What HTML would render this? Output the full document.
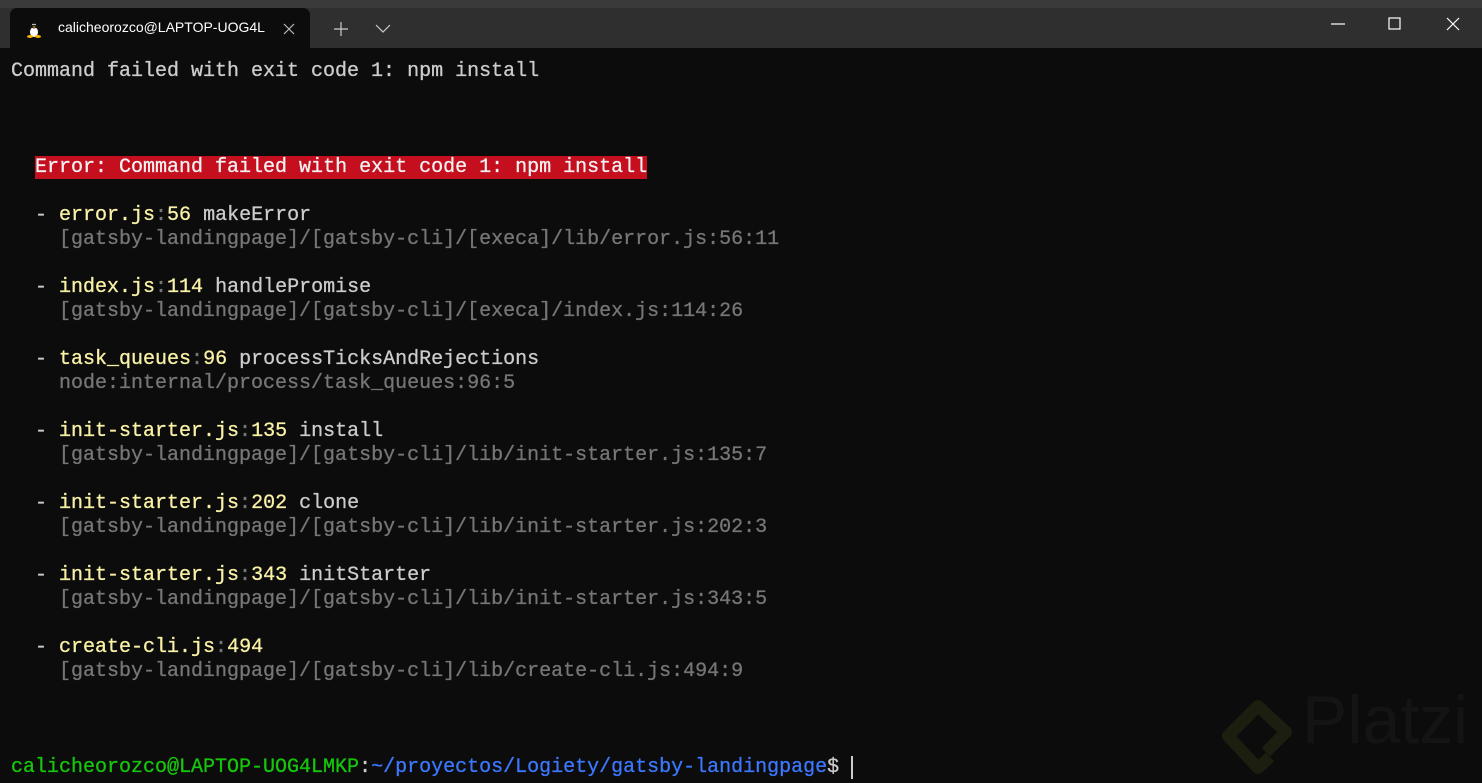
<!DOCTYPE html>
<html><head><meta charset="utf-8"><style>
html,body{margin:0;padding:0;background:#0c0c0c;width:1482px;height:783px;overflow:hidden}
.top{position:absolute;left:0;top:0;width:1482px;height:48px;background:#2f2f2f}
.strip{position:absolute;left:0;top:0;width:1482px;height:8px;background:#3a3a3a}
.tab{position:absolute;left:10px;top:8px;width:300px;height:40px;background:#0c0c0c;border-radius:7px 7px 0 0}
.tab .t{position:absolute;left:48px;top:11px;font:14px "Liberation Sans",sans-serif;color:#fff}
.term{position:absolute;left:11px;top:60px;font:20px/24px "Liberation Mono",monospace;color:#cccccc;white-space:pre;-webkit-text-stroke:0.3px currentColor}
.y{color:#f9f1a5}.g{color:#767676}.r{background:#c50f1f;color:#f2f2f2}
.p{color:#16c60c}.b{color:#3b78ff}
</style></head><body>
<div class="top"><div class="strip"></div>
<div class="tab">
<svg style="position:absolute;left:16px;top:12px" width="16" height="18" viewBox="0 0 16 18"><ellipse cx="8" cy="10" rx="6" ry="7" fill="#111"/><ellipse cx="8" cy="12" rx="4" ry="5" fill="#fff"/><ellipse cx="8" cy="5" rx="3" ry="3.5" fill="#111"/><circle cx="7" cy="4.5" r="0.8" fill="#fff"/><circle cx="9" cy="4.5" r="0.8" fill="#fff"/><path d="M6.5 6.5h3l-1.5 1.5z" fill="#f5b400"/><ellipse cx="4" cy="16.5" rx="3" ry="1.5" fill="#f5b400"/><ellipse cx="12" cy="16.5" rx="3" ry="1.5" fill="#f5b400"/></svg>
<div class="t">calicheorozco@LAPTOP-UOG4L</div>
<svg style="position:absolute;left:273px;top:15px" width="12" height="12"><path d="M1 1L11 11M11 1L1 11" stroke="#bbb" stroke-width="1.2"/></svg>
</div>
<svg style="position:absolute;left:332px;top:20px" width="18" height="18"><path d="M9 2V16M2 9H16" stroke="#ccc" stroke-width="1.2"/></svg>
<svg style="position:absolute;left:375px;top:24px" width="16" height="10"><path d="M1 1L8 8L15 1" stroke="#ccc" stroke-width="1.2" fill="none"/></svg>
<svg style="position:absolute;left:1331px;top:23px" width="14" height="2"><path d="M0 1H14" stroke="#fff" stroke-width="1.2"/></svg>
<svg style="position:absolute;left:1388px;top:17px" width="14" height="14"><rect x="1" y="1" width="11" height="11" stroke="#fff" stroke-width="1.2" fill="none"/></svg>
<svg style="position:absolute;left:1446px;top:17px" width="14" height="14"><path d="M1 1L13 13M13 1L1 13" stroke="#fff" stroke-width="1.2"/></svg>
</div>
<svg style="position:absolute;left:1218px;top:692px" width="80" height="90" viewBox="0 0 80 90"><path d="M48 60L68 40L40 14L10 44L40 76L52 65" stroke="#1c1e10" stroke-width="12" fill="none" stroke-linejoin="round"/></svg>
<div style="position:absolute;left:1302px;top:686px;font:68px/1 'Liberation Sans',sans-serif;color:#141414">Platzi</div>
<div class="term">Command failed with exit code 1: npm install



  <span class="r">Error: Command failed with exit code 1: npm install</span>

  - <span class="y">error.js</span><span class="g">:</span><span class="y">56</span> makeError
    <span class="g">[gatsby-landingpage]/[gatsby-cli]/[execa]/lib/error.js:56:11</span>

  - <span class="y">index.js</span><span class="g">:</span><span class="y">114</span> handlePromise
    <span class="g">[gatsby-landingpage]/[gatsby-cli]/[execa]/index.js:114:26</span>

  - <span class="y">task_queues</span><span class="g">:</span><span class="y">96</span> processTicksAndRejections
    <span class="g">node:internal/process/task_queues:96:5</span>

  - <span class="y">init-starter.js</span><span class="g">:</span><span class="y">135</span> install
    <span class="g">[gatsby-landingpage]/[gatsby-cli]/lib/init-starter.js:135:7</span>

  - <span class="y">init-starter.js</span><span class="g">:</span><span class="y">202</span> clone
    <span class="g">[gatsby-landingpage]/[gatsby-cli]/lib/init-starter.js:202:3</span>

  - <span class="y">init-starter.js</span><span class="g">:</span><span class="y">343</span> initStarter
    <span class="g">[gatsby-landingpage]/[gatsby-cli]/lib/init-starter.js:343:5</span>

  - <span class="y">create-cli.js</span><span class="g">:</span><span class="y">494</span>
    <span class="g">[gatsby-landingpage]/[gatsby-cli]/lib/create-cli.js:494:9</span>



<span class="p">calicheorozco@LAPTOP-UOG4LMKP</span>:<span class="b">~/proyectos/Logiety/gatsby-landingpage</span>$ <span style="border-left:2px solid #ccc"> </span></div>
</body></html>
